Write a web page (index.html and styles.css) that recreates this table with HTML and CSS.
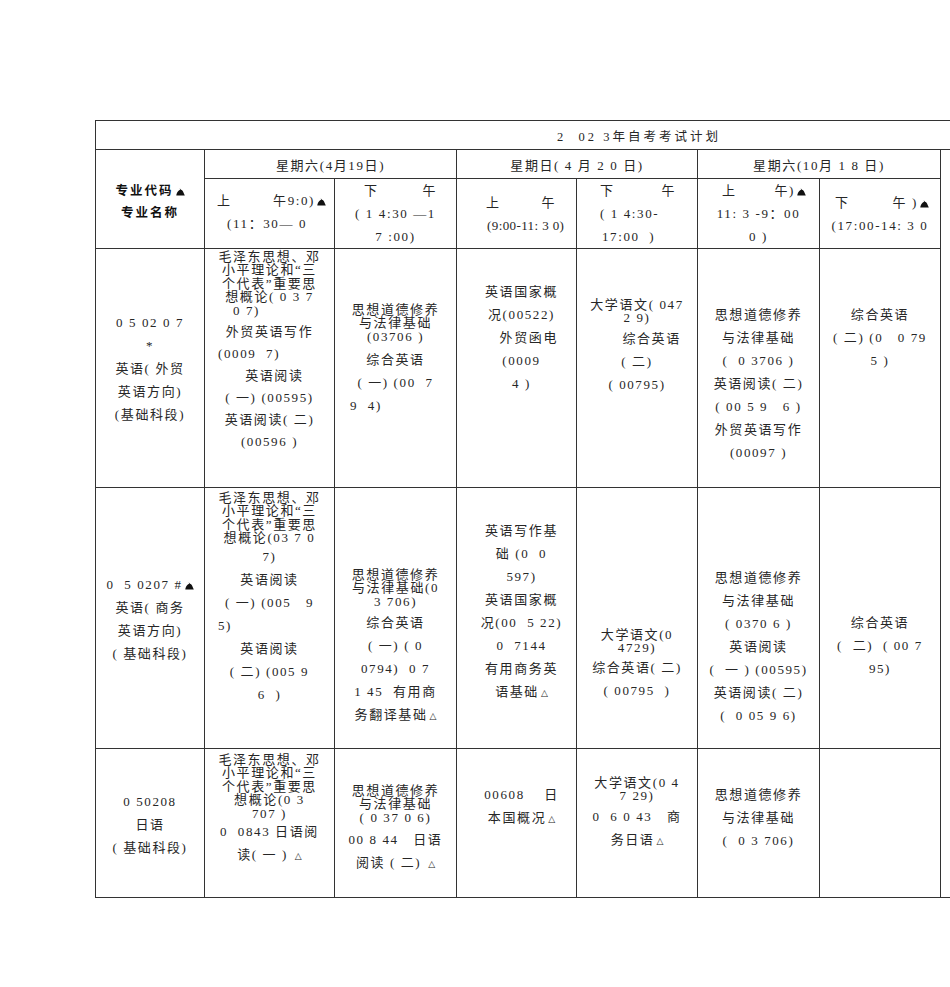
FILE: index.html
```html
<!DOCTYPE html>
<html lang="zh-CN">
<head>
<meta charset="utf-8">
<title>2023年自考考试计划</title>
<link rel="stylesheet" href="styles.css">
</head>
<body>
<table class="plan">
<colgroup>
<col class="w1"><col class="w2"><col class="w3"><col class="w4"><col class="w5"><col class="w6"><col class="w7"><col class="w8">
</colgroup>
<tr class="r-title"><td colspan="8" class="title">2  02 3年自考考试计划</td></tr>
<tr class="r-week">
<td rowspan="2" class="hd"><div class="s2">专业代码<svg class="mk" viewBox="0 0 9 8"><path d="M0.3 7.6 C0.8 4.2 2.8 1.6 5 1.8 C6.6 2 7.6 4.6 8.8 7.6 Z M3.6 0.2 L5.4 1.9 L4.6 2.2 Z"/></svg></div><div class="s2">专业名称</div></td>
<td colspan="2" class="wk">星期六(4月19日)</td>
<td colspan="2" class="wk">星期日( 4 月 2 0 日)</td>
<td colspan="2" class="wk">星期六(10月 1 8 日)</td>
<td rowspan="5" class="extra"></td>
</tr>
<tr class="r-time">
<td><div class="pt10"><div class="s sp t1"><span>上</span><span>午9:0)<svg class="mk" viewBox="0 0 9 8"><path d="M0.3 7.6 C0.8 4.2 2.8 1.6 5 1.8 C6.6 2 7.6 4.6 8.8 7.6 Z M3.6 0.2 L5.4 1.9 L4.6 2.2 Z"/></svg></span></div><div class="s lf in22">(11：30— 0</div></div></td>
<td><div class="s sp t2"><span>下</span><span>午</span></div><div class="s">( 1 4:30 —1</div><div class="s">7 :00)</div></td>
<td><div class="pt12"><div class="s sp t3"><span>上</span><span>午</span></div><div class="s lf in30 tight">(9:00-11: 3 0)</div></div></td>
<td><div class="s sp t4"><span>下</span><span>午</span></div><div class="s lf in23">( 1 4:30-</div><div class="s lf in25">17:00  )</div></td>
<td><div class="s sp t5"><span>上</span><span>午)<svg class="mk" viewBox="0 0 9 8"><path d="M0.3 7.6 C0.8 4.2 2.8 1.6 5 1.8 C6.6 2 7.6 4.6 8.8 7.6 Z M3.6 0.2 L5.4 1.9 L4.6 2.2 Z"/></svg></span></div><div class="s">11: 3 -9：00</div><div class="s">0 )</div></td>
<td><div class="pt12"><div class="s sp t6"><span>下</span><span>午 )<svg class="mk" viewBox="0 0 9 8"><path d="M0.3 7.6 C0.8 4.2 2.8 1.6 5 1.8 C6.6 2 7.6 4.6 8.8 7.6 Z M3.6 0.2 L5.4 1.9 L4.6 2.2 Z"/></svg></span></div><div class="s">(17:00-14: 3 0</div></div></td>
</tr>

<tr class="r1">
<td><div class="pt62"><div class="s">0 5 02 0 7</div><div class="s">*</div><div class="s">英语( 外贸</div><div class="s">英语方向)</div><div class="s">(基础科段)</div></div></td>
<td><div class="pt1"><div class="d">毛泽东思想、邓</div><div class="d">小平理论和“三</div><div class="d">个代表”重要思</div><div class="d">想概论( 0 3 7</div><div class="d lf in28">0 7)</div><div class="s2 g4">外贸英语写作</div><div class="s2 lf in13">(0009  7)</div><div class="s2">  英语阅读</div><div class="s2">( 一) (00595)</div><div class="s2">英语阅读( 二)</div><div class="s2">(00596 )</div></div></td>
<td><div class="pt54"><div class="d">思想道德修养</div><div class="d">与法律基础</div><div class="d">(03706 )</div><div class="s g5">综合英语</div><div class="s">( 一) (00  7</div><div class="s lf in15">9  4)</div></div></td>
<td class="c4"><div class="pt31"><div class="s">英语国家概</div><div class="s">况(00522)</div><div class="s">　外贸函电</div><div class="s">(0009</div><div class="s">4 )</div></div></td>
<td><div class="pt49"><div class="d">大学语文( 047</div><div class="d">2 9)</div><div class="s g2">　　综合英语</div><div class="s">( 二)</div><div class="s">( 00795)</div></div></td>
<td><div class="pt54"><div class="s">思想道德修养</div><div class="s">与法律基础</div><div class="s">(  0 3706 )</div><div class="s">英语阅读( 二)</div><div class="s">( 00 5 9   6 )</div><div class="s">外贸英语写作</div><div class="s">(00097 )</div></div></td>
<td><div class="pt54"><div class="s">综合英语</div><div class="s">( 二) (0   0 79</div><div class="s">5 )</div></div></td>
</tr>

<tr class="r2">
<td><div class="pt85"><div class="s">0  5 0207 #<svg class="mk" viewBox="0 0 9 8"><path d="M0.3 7.6 C0.8 4.2 2.8 1.6 5 1.8 C6.6 2 7.6 4.6 8.8 7.6 Z M3.6 0.2 L5.4 1.9 L4.6 2.2 Z"/></svg></div><div class="s">英语( 商务</div><div class="s">英语方向)</div><div class="s">( 基础科段)</div></div></td>
<td><div class="pt3"><div class="d">毛泽东思想、邓</div><div class="d">小平理论和“三</div><div class="d">个代表”重要思</div><div class="d">想概论(03 7 0</div><div class="s">7)</div><div class="s">英语阅读</div><div class="s">( 一) (005   9</div><div class="s lf in13">5)</div><div class="s">英语阅读</div><div class="s">( 二) (005 9</div><div class="s">6  )</div></div></td>
<td><div class="pt80"><div class="d">思想道德修养</div><div class="d">与法律基础(0</div><div class="d">3 706)</div><div class="s g3">综合英语</div><div class="s">( 一) ( 0</div><div class="s">0794)  0 7</div><div class="s">1 45  有用商</div><div class="s">务翻译基础<span class="tri">△</span></div></div></td>
<td class="c4"><div class="pt31"><div class="s">英语写作基</div><div class="s">础 (0  0</div><div class="s">597)</div><div class="s">英语国家概</div><div class="s">况(00  5 22)</div><div class="s">0  7144</div><div class="s">有用商务英</div><div class="s">语基础<span class="tri">△</span></div></div></td>
<td><div class="pt141"><div class="d">大学语文(0</div><div class="d">4729)</div><div class="s g1">综合英语( 二)</div><div class="s">( 00795  )</div></div></td>
<td><div class="pt78"><div class="s">思想道德修养</div><div class="s">与法律基础</div><div class="s">( 0370 6 )</div><div class="s">英语阅读</div><div class="s">(  一 ) (00595)</div><div class="s">英语阅读( 二)</div><div class="s">(  0 05 9 6)</div></div></td>
<td><div class="pt123"><div class="s">综合英语</div><div class="s">(  二)  ( 00 7</div><div class="s">95)</div></div></td>
</tr>

<tr class="r3">
<td><div class="pt41"><div class="s">0 50208</div><div class="s">日语</div><div class="s">( 基础科段)</div></div></td>
<td><div class="pt4"><div class="d">毛泽东思想、邓</div><div class="d">小平理论和“三</div><div class="d">个代表”重要思</div><div class="d">想概论(0 3</div><div class="d">707 )</div><div class="s">0  0843 日语阅</div><div class="s">读( 一 ) <span class="tri">△</span></div></div></td>
<td><div class="pt35"><div class="d">思想道德修养</div><div class="d">与法律基础</div><div class="d">( 0 37 0 6)</div><div class="s g4">00 8 44   日语</div><div class="s">阅读 ( 二) <span class="tri">△</span></div></div></td>
<td class="c4"><div class="pt34"><div class="s">00608    日</div><div class="s">本国概况<span class="tri">△</span></div></div></td>
<td><div class="pt27"><div class="d">大学语文(0 4</div><div class="d">7 29)</div><div class="s g2">0  6 0 43   商</div><div class="s">务日语<span class="tri">△</span></div></div></td>
<td><div class="pt34"><div class="s">思想道德修养</div><div class="s">与法律基础</div><div class="s">(  0 3 706)</div></div></td>
<td></td>
</tr>
</table>
</body>
</html>
```
FILE: styles.css
```css
html, body {
  margin: 0;
  padding: 0;
  background: #ffffff;
}
body {
  overflow: hidden;
  width: 950px;
  height: 987px;
  font-family: "Liberation Serif", "Noto Sans CJK SC", serif;
  font-size: 13px;
  letter-spacing: 1.6px;
  color: #262626;
}
.plan {
  border-collapse: collapse;
  table-layout: fixed;
  width: 1108px;
  margin: 120px 0 0 95px;
}
.w1 { width: 109px; }
.w2 { width: 130px; }
.w3 { width: 122px; }
.w4 { width: 120px; }
.w5 { width: 121px; }
.w6 { width: 122px; }
.w7 { width: 121px; }
.w8 { width: 263px; }

.plan td {
  border: 1px solid #333;
  padding: 0;
  vertical-align: top;
  text-align: center;
  overflow: hidden;
}
.r-title { height: 29px; }
.r-week { height: 29px; }
.r-time { height: 70px; }
.r1 { height: 239px; }
.r2 { height: 261px; }
.r3 { height: 149px; }

.plan td.title {
  vertical-align: middle;
  text-align: left;
  padding-left: 461px;
  letter-spacing: 3px;
  font-size: 12.5px;
  white-space: pre;
}
.plan td.wk {
  vertical-align: middle;
  white-space: pre;
}
.plan td.hd {
  padding-top: 29px;
  font-family: "Noto Sans CJK SC", sans-serif;
  font-weight: 700;
  font-size: 12.5px;
  letter-spacing: 2px;
  color: #111;
}
.plan td.c4 { padding-left: 10px; }

.d, .s, .s2 { white-space: pre; }
.d { height: 13.4px; line-height: 13.4px; }
.s { height: 23px; line-height: 23px; }
.s2 { height: 22px; line-height: 22px; }

.lf { text-align: left; }
.tight { letter-spacing: 0.4px; }
.in13 { padding-left: 13px; }
.in15 { padding-left: 15px; }
.in22 { padding-left: 22px; }
.in23 { padding-left: 23px; }
.in25 { padding-left: 25px; }
.in28 { padding-left: 28px; }
.in30 { padding-left: 30px; }

.sp { display: flex; justify-content: space-between; }
.t1 { padding: 0 8px 0 12px; }
.t2 { padding: 0 19px 0 29px; }
.t3 { padding: 0 20px 0 29px; }
.t4 { padding: 0 21px 0 23px; }
.t5 { padding: 0 13px 0 24px; }
.t6 { padding: 0 11px 0 15px; }

.g1 { margin-top: 1px; }
.g2 { margin-top: 2px; }
.g3 { margin-top: 3px; }
.g4 { margin-top: 4px; }
.g5 { margin-top: 5px; }

.pt1 { padding-top: 1px; }
.pt3 { padding-top: 3px; }
.pt4 { padding-top: 4px; }
.pt10 { padding-top: 10px; }
.pt12 { padding-top: 12px; }
.pt27 { padding-top: 27px; }
.pt31 { padding-top: 31px; }
.pt34 { padding-top: 34px; }
.pt35 { padding-top: 35px; }
.pt41 { padding-top: 41px; }
.pt49 { padding-top: 49px; }
.pt54 { padding-top: 54px; }
.pt62 { padding-top: 62px; }
.pt78 { padding-top: 78px; }
.pt80 { padding-top: 80px; }
.pt85 { padding-top: 85px; }
.pt123 { padding-top: 123px; }
.pt141 { padding-top: 140px; }

.mk {
  width: 9px;
  height: 8px;
  margin-left: 2px;
  fill: #111;
  vertical-align: -1px;
}
.tri {
  font-family: "DejaVu Sans", sans-serif;
  font-size: 9px;
  letter-spacing: 0;
  margin-left: 2px;
}
```
